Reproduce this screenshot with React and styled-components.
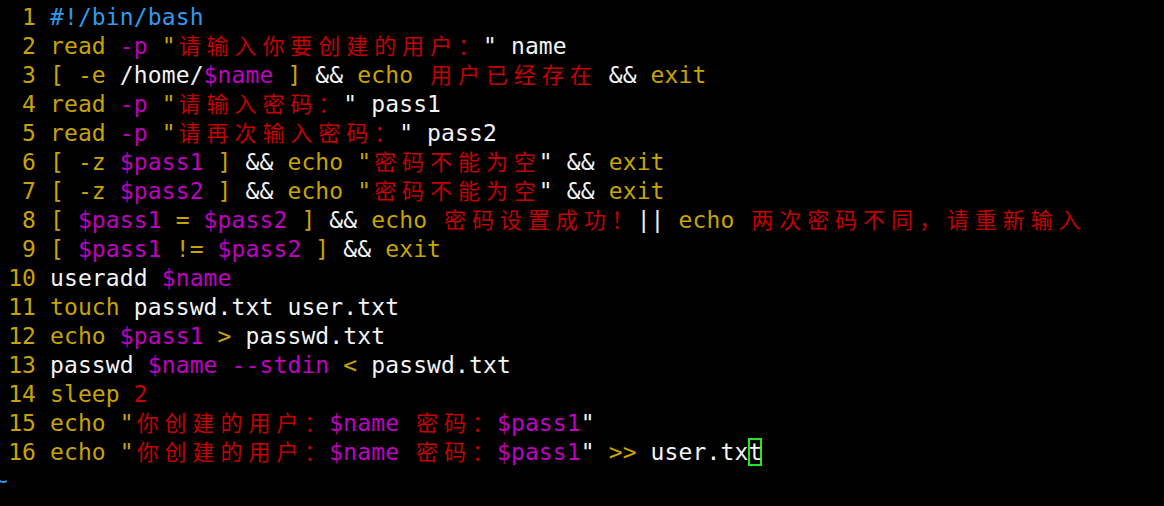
import React from 'react'
import styled, { createGlobalStyle } from 'styled-components'

const colors = {
  y: '#c8a400',
  v: '#c000c0',
  s: '#c40000',
  n: '#cc0000',
  w: '#f4f4f4',
  c: '#2f9bf0',
}

const CELL = 13.97

const Q = ['y', '"']
const QE = ['w', '"']
const SP = ['w', ' ']
const AND = ['w', ' && ']

const lines = [
  [['c', '#!/bin/bash']],
  [['y', 'read'], SP, ['v', '-p'], SP, Q, ['s', '请输入你要创建的用户：'], QE, ['w', ' name']],
  [['y', '[ -e'], ['w', ' /home/'], ['v', '$name'], ['y', ' ]'], AND, ['y', 'echo'], ['s', ' 用户已经存在'], AND, ['y', 'exit']],
  [['y', 'read'], SP, ['v', '-p'], SP, Q, ['s', '请输入密码：'], QE, ['w', ' pass1']],
  [['y', 'read'], SP, ['v', '-p'], SP, Q, ['s', '请再次输入密码：'], QE, ['w', ' pass2']],
  [['y', '[ -z '], ['v', '$pass1'], ['y', ' ]'], AND, ['y', 'echo'], SP, Q, ['s', '密码不能为空'], QE, AND, ['y', 'exit']],
  [['y', '[ -z '], ['v', '$pass2'], ['y', ' ]'], AND, ['y', 'echo'], SP, Q, ['s', '密码不能为空'], QE, AND, ['y', 'exit']],
  [['y', '[ '], ['v', '$pass1'], ['y', ' = '], ['v', '$pass2'], ['y', ' ]'], AND, ['y', 'echo'], ['s', ' 密码设置成功！'], ['w', '||'], SP, ['y', 'echo'], ['s', ' 两次密码不同，请重新输入']],
  [['y', '[ '], ['v', '$pass1'], ['y', ' != '], ['v', '$pass2'], ['y', ' ]'], AND, ['y', 'exit']],
  [['w', 'useradd '], ['v', '$name']],
  [['y', 'touch'], ['w', ' passwd.txt user.txt']],
  [['y', 'echo '], ['v', '$pass1'], ['y', ' > '], ['w', 'passwd.txt']],
  [['w', 'passwd '], ['v', '$name --stdin'], ['y', ' < '], ['w', 'passwd.txt']],
  [['y', 'sleep '], ['n', '2']],
  [['y', 'echo '], Q, ['s', '你创建的用户：'], ['v', '$name'], ['s', ' 密码：'], ['v', '$pass1'], QE],
  [['y', 'echo '], Q, ['s', '你创建的用户：'], ['v', '$name'], ['s', ' 密码：'], ['v', '$pass1'], QE, ['y', ' >> '], ['w', 'user.tx'], ['cursor', 't']],
]

const isWide = (ch) => /[\u3000-\u9fff\uff00-\uffef]/.test(ch)

// terminal grid: ascii takes one cell, CJK takes two
function Text({ text }) {
  return [...text].map((ch, i) =>
    isWide(ch) ? <Wide key={i}>{ch}</Wide> : <Narrow key={i}>{ch}</Narrow>
  )
}

export default function App() {
  return (
    <Terminal>
      <GlobalStyle />
      {lines.map((tokens, i) => (
        <Line key={i}>
          <Num>{i + 1}</Num>
          {tokens.map(([type, text], j) =>
            type === 'cursor' ? (
              <Cursor key={j}>{text}</Cursor>
            ) : (
              <Tok key={j} $c={colors[type]}>
                <Text text={text} />
              </Tok>
            )
          )}
        </Line>
      ))}
      <Line>
        <Tilde>~</Tilde>
      </Line>
    </Terminal>
  )
}

const GlobalStyle = createGlobalStyle`
  html, body {
    margin: 0;
    background: #000;
  }
`

const Terminal = styled.div`
  width: 1164px;
  height: 506px;
  overflow: hidden;
  box-sizing: border-box;
  padding: 3px 0 0 8px;
  background: #000;
  font-family: 'DejaVu Sans Mono', 'Noto Sans CJK SC', monospace;
  font-size: 23px;
`

const Line = styled.div`
  height: 29px;
  line-height: 29px;
  white-space: pre;
  color: ${colors.w};
`

const Num = styled.span`
  display: inline-block;
  width: ${CELL * 2}px;
  margin-right: ${CELL}px;
  text-align: right;
  color: ${colors.y};
`

const Tok = styled.span`
  color: ${(p) => p.$c};
`

const Narrow = styled.span`
  display: inline-block;
  width: ${CELL}px;
  text-align: center;
`

const Wide = styled.span`
  display: inline-block;
  width: ${CELL * 2}px;
  text-align: center;
  font-size: 22px;
`

const Cursor = styled.span`
  display: inline-block;
  width: ${CELL}px;
  height: 28px;
  line-height: 28px;
  vertical-align: top;
  text-align: center;
  color: ${colors.w};
  box-shadow: inset 0 0 0 2px #1ee81e;
`

const Tilde = styled.span`
  display: inline-block;
  margin-left: -14px;
  color: ${colors.c};
`
